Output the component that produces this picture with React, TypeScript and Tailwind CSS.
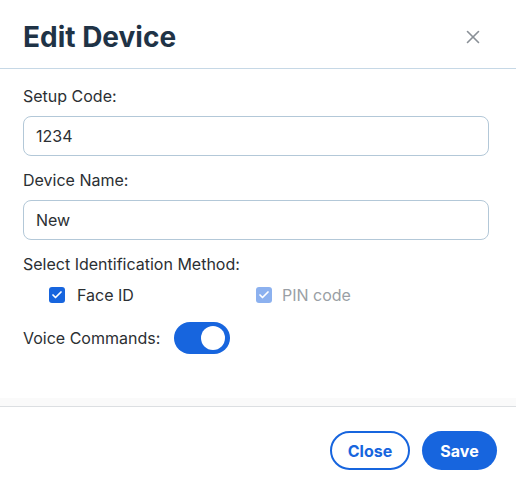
import { X, Check } from 'lucide-react';

export default function App() {
  return (
    <div className="w-[516px] h-[486px] bg-white flex flex-col text-[#2b2f33]" style={{ fontFamily: 'Inter, "Noto Sans", sans-serif' }}>
      {/* Header */}
      <div className="h-[69px] shrink-0 flex items-center justify-between pl-[23px] pr-[32px] pt-[6px] border-b border-[#c6d8e6]">
        <h2 className="text-[28px] font-bold text-[#1f3346] leading-none">Edit Device</h2>
        <button className="text-[#8a9097]">
          <X className="w-[22px] h-[22px]" strokeWidth={1.75} />
        </button>
      </div>

      {/* Body */}
      <div className="flex-1 flex flex-col px-[23px] pt-[15px]">
        <label className="text-[16px] leading-[24px]">Setup Code:</label>
        <input
          defaultValue="1234"
          className="mt-2 h-[40px] w-[466px] px-3 rounded-lg border border-[#b3c8d8] text-[16px] text-[#2b2f33] outline-none"
        />

        <label className="mt-3 text-[16px] leading-[24px]">Device Name:</label>
        <input
          defaultValue="New"
          className="mt-2 h-[40px] w-[466px] px-3 rounded-lg border border-[#b3c8d8] text-[16px] text-[#2b2f33] outline-none"
        />

        <label className="mt-3 text-[16px] leading-[24px]">Select Identification Method:</label>
        <div className="mt-[7px] flex items-center h-[24px] pl-[26px]">
          <div className="flex items-center w-[207px]">
            <span className="w-4 h-4 rounded-[3px] bg-[#1765de] flex items-center justify-center">
              <Check className="w-3 h-3 text-white" strokeWidth={3.5} />
            </span>
            <span className="ml-[12px] text-[16px]">Face ID</span>
          </div>
          <div className="flex items-center">
            <span className="w-4 h-4 rounded-[3px] bg-[#8cb1ef] flex items-center justify-center">
              <Check className="w-3 h-3 text-white" strokeWidth={3.5} />
            </span>
            <span className="ml-[10px] text-[16px] text-[#9a9fa5]">PIN code</span>
          </div>
        </div>

        <div className="mt-[15px] flex items-center">
          <span className="text-[16px] leading-[24px]">Voice Commands:</span>
          <button className="ml-[14px] w-[56px] h-[32px] rounded-full bg-[#1765de] flex items-center justify-end pr-[5px]">
            <span className="w-[24px] h-[24px] rounded-full bg-white" />
          </button>
        </div>
      </div>

      {/* Footer */}
      <div className="h-[8px] bg-[#fafafa] shrink-0" />
      <div className="shrink-0 border-t border-[#dcdfe2] flex items-center justify-end gap-3 pr-[19px] pt-[24px] pb-[16px]">
        <button className="h-[39px] w-[80px] rounded-full border-2 border-[#1765de] text-[#1765de] font-bold text-[16px]">
          Close
        </button>
        <button className="h-[39px] w-[75px] rounded-full bg-[#1765de] text-white font-bold text-[16px]">
          Save
        </button>
      </div>
    </div>
  );
}
